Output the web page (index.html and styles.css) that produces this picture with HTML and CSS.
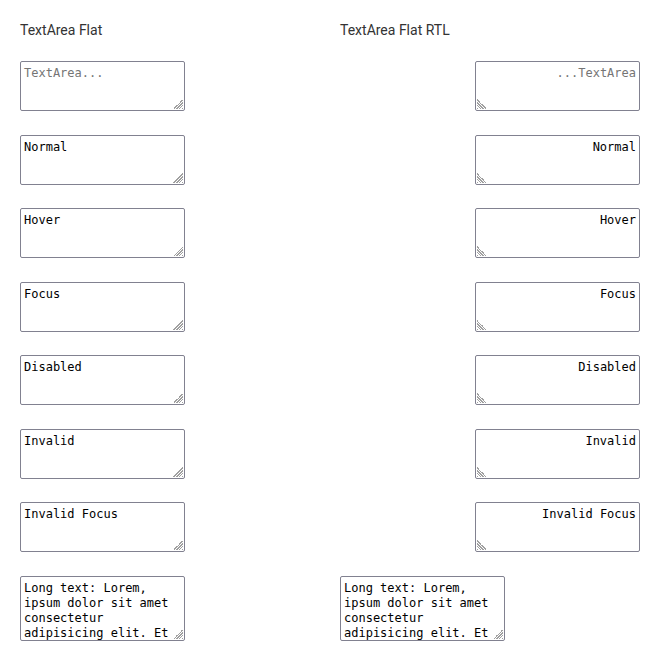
FILE: index.html
```html
<!DOCTYPE html>
<html>
<head>
<meta charset="utf-8">
<link rel="stylesheet" href="styles.css">
</head>
<body>
<div class="page">
  <section class="col">
    <div class="title">TextArea Flat</div>
    <div class="item"><textarea class="ta" placeholder="TextArea..."></textarea></div>
    <div class="item"><textarea class="ta">Normal</textarea></div>
    <div class="item"><textarea class="ta">Hover</textarea></div>
    <div class="item"><textarea class="ta">Focus</textarea></div>
    <div class="item"><textarea class="ta">Disabled</textarea></div>
    <div class="item"><textarea class="ta">Invalid</textarea></div>
    <div class="item"><textarea class="ta">Invalid Focus</textarea></div>
    <div class="item"><textarea class="ta ta-long">Long text: Lorem, ipsum dolor sit amet consectetur adipisicing elit. Et eveniet officiis quisquam, ab ut omnis.</textarea></div>
  </section>
  <section class="col">
    <div class="title">TextArea Flat RTL</div>
    <div class="item rtl" dir="rtl"><textarea class="ta ta-rtl" dir="rtl" placeholder="TextArea..."></textarea></div>
    <div class="item rtl" dir="rtl"><textarea class="ta ta-rtl" dir="rtl">Normal</textarea></div>
    <div class="item rtl" dir="rtl"><textarea class="ta ta-rtl" dir="rtl">Hover</textarea></div>
    <div class="item rtl" dir="rtl"><textarea class="ta ta-rtl" dir="rtl">Focus</textarea></div>
    <div class="item rtl" dir="rtl"><textarea class="ta ta-rtl" dir="rtl">Disabled</textarea></div>
    <div class="item rtl" dir="rtl"><textarea class="ta ta-rtl" dir="rtl">Invalid</textarea></div>
    <div class="item rtl" dir="rtl"><textarea class="ta ta-rtl" dir="rtl">Invalid Focus</textarea></div>
    <div class="item"><textarea class="ta ta-long">Long text: Lorem, ipsum dolor sit amet consectetur adipisicing elit. Et eveniet officiis quisquam, ab ut omnis.</textarea></div>
  </section>
</div>
</body>
</html>
```

FILE: styles.css
```css
html, body {
  margin: 0;
  padding: 0;
  background: #ffffff;
}

.page {
  display: grid;
  grid-template-columns: 300px 300px;
  column-gap: 20px;
  padding: 20px;
}

.col {
  display: flex;
  flex-direction: column;
}

.title {
  font-family: Roboto, "Liberation Sans", sans-serif;
  font-size: 14px;
  line-height: 20px;
  color: #333333;
  margin-bottom: 21px;
}

.item {
  display: flex;
  margin-bottom: 23.5px;
}

.ta {
  box-sizing: border-box;
  width: 165px;
  height: 50px;
  margin: 0;
  padding: 4px 3px;
  border: 1px solid #818190;
  border-radius: 2px;
  font-family: "DejaVu Sans Mono", monospace;
  font-size: 12px;
  line-height: 15px;
  color: #000000;
  background: #ffffff;
  overflow: hidden;
  outline: none;
}

.ta::placeholder {
  color: #757575;
}

.ta::-webkit-resizer {
  background-color: transparent;
  background-image:
    linear-gradient(135deg, #ffffff 50%, transparent 50%),
    repeating-linear-gradient(135deg, #ffffff 0 1px, #a0a0a0 1px 2px);
  background-size: 10px 10px;
  background-position: right 1px bottom 1px;
  background-repeat: no-repeat;
}

.ta-rtl::-webkit-resizer {
  background-image:
    linear-gradient(225deg, #ffffff 50%, transparent 50%),
    repeating-linear-gradient(225deg, #ffffff 0 1px, #a0a0a0 1px 2px);
  background-position: left 1px bottom 1px;
}

.ta-long {
  height: 65px;
}
```
